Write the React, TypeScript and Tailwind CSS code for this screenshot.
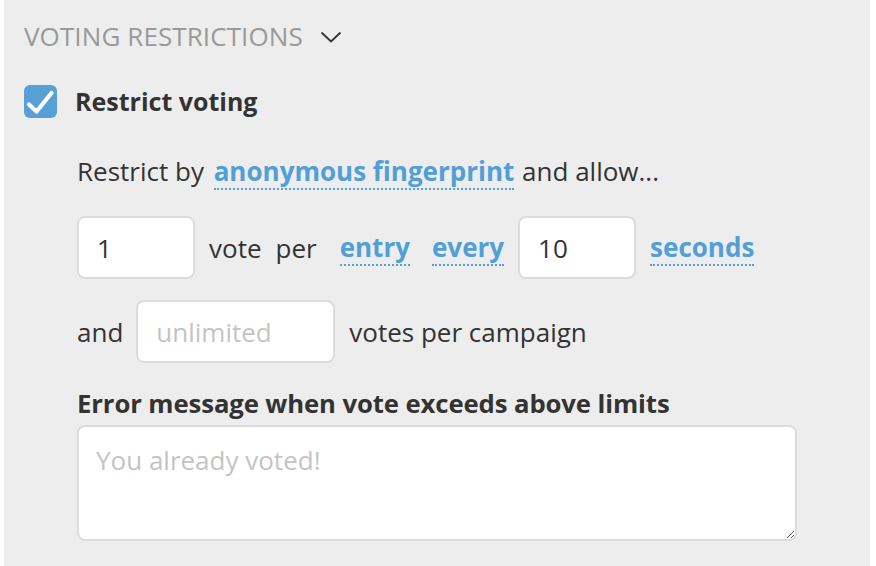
import { useState } from "react";

const Link = ({ children, className = "" }: { children: React.ReactNode; className?: string }) => (
  <span
    className={`inline-block font-bold text-[#519fd6] border-b-2 border-dotted border-[#519fd6] leading-[34px] cursor-pointer ${className}`}
  >
    {children}
  </span>
);

export default function App() {
  const [checked, setChecked] = useState(true);

  return (
    <div className="w-[876px] h-[566px] bg-white font-['Open_Sans',sans-serif] text-[26px] leading-[36px] text-[#333]">
      <div className="ml-1 w-[866px] h-full bg-[#ededed] pt-[18px] pl-5">
        <div className="flex items-center">
          <span className="text-[#999] tracking-[0.1px]">VOTING RESTRICTIONS</span>
          <svg className="ml-[17px] mt-[1px]" width="22" height="12" viewBox="0 0 22 12" fill="none">
            <path d="M1.5 1.5 L11 10.5 L20.5 1.5" stroke="#333" strokeWidth="1.8" />
          </svg>
        </div>

        <label className="mt-[29px] flex items-center cursor-pointer">
          <span
            onClick={() => setChecked(!checked)}
            className={`w-[33px] h-[33px] rounded-[6px] flex items-center justify-center ${checked ? "bg-[#56a0d6]" : "bg-white border-2 border-[#ccc]"}`}
          >
            {checked && (
              <svg width="33" height="33" viewBox="0 0 33 33" fill="none">
                <path d="M5 19.5 L12.5 26.5 L27.5 8" stroke="white" strokeWidth="4.2" strokeLinecap="round" strokeLinejoin="round" />
              </svg>
            )}
          </span>
          <span className="ml-[18px] font-bold text-[25px]">Restrict voting</span>
        </label>

        <div className="pl-[53px]">
          <p className="mt-[34px]">
            Restrict by <Link className="ml-[3px] mr-[1px]">anonymous fingerprint</Link> and allow...
          </p>

          <div className="mt-[26px] flex items-center">
            <input
              defaultValue="1"
              className="w-[118px] h-[63px] rounded-[8px] bg-white border-2 border-[#dcdcdc] px-[18px] outline-none"
            />
            <span className="ml-[14px]">vote</span>
            <span className="ml-[14px]">per</span>
            <Link className="ml-[23px]">entry</Link>
            <Link className="ml-[22px]">every</Link>
            <input
              defaultValue="10"
              className="ml-[14px] w-[118px] h-[63px] rounded-[8px] bg-white border-2 border-[#dcdcdc] px-[18px] outline-none"
            />
            <Link className="ml-[14px]">seconds</Link>
          </div>

          <div className="mt-[21px] flex items-center">
            <span>and</span>
            <input
              placeholder="unlimited"
              className="ml-[13px] w-[199px] h-[63px] rounded-[8px] bg-white border-2 border-[#dcdcdc] px-[18px] outline-none placeholder:text-[#c4c4c4]"
            />
            <span className="ml-[14px]">votes per campaign</span>
          </div>

          <p className="mt-[23px] font-bold text-[25.7px] tracking-[-0.1px]">Error message when vote exceeds above limits</p>
          <textarea
            placeholder="You already voted!"
            className="mt-[3px] block w-[720px] h-[116px] rounded-[8px] bg-white border-2 border-[#dcdcdc] px-[17px] pt-[15px] pb-[9px] outline-none placeholder:text-[#c4c4c4]"
          />
        </div>
      </div>
    </div>
  );
}
